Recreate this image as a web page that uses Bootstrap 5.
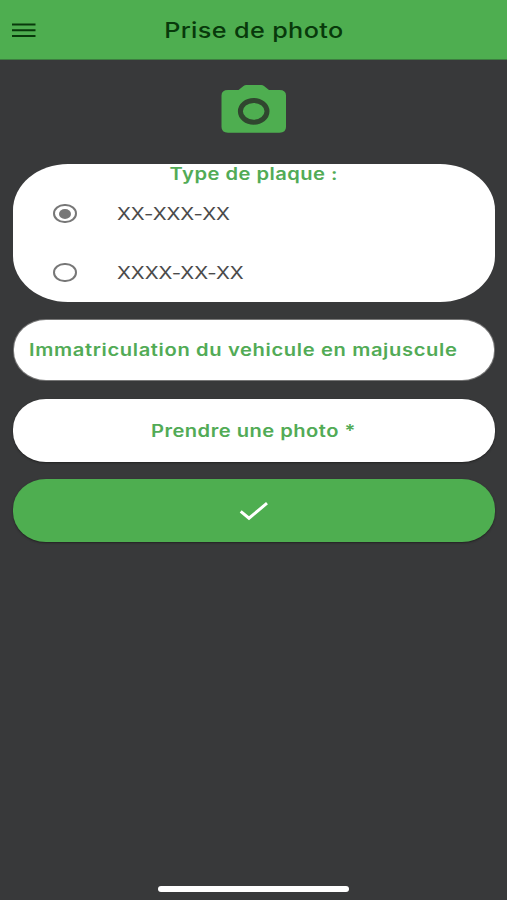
<!DOCTYPE html>
<html lang="fr">
<head>
<meta charset="utf-8">
<meta name="viewport" content="width=device-width, initial-scale=1">
<title>Prise de photo</title>
<link href="https://cdn.jsdelivr.net/npm/bootstrap@5.3.0/dist/css/bootstrap.min.css" rel="stylesheet">
<style>
  body { background: #38393a; font-family: Inter, "Liberation Sans", sans-serif; }
  .app { height: 900px; overflow: hidden; }
  .top-bar { height: 60px; background: #4eae50; padding: 0 12px; border-bottom: 1px solid #3d7d40; }
  .menu-btn { width: 24px; line-height: 0; }
  .wide { display: inline-block; transform: scaleX(1.2); white-space: nowrap; line-height: 20px; }
  .from-left { transform-origin: left center; }
  .title { font-size: 21px; font-weight: 500; color: #08390b; letter-spacing: .3px; padding-top: 6px; padding-left: 1px; }
  .green { color: #52ab56; font-size: 16.8px; font-weight: 600; letter-spacing: .4px; }
  .camera { margin: 24px auto 31px; line-height: 0; }
  .content { padding: 0 12.5px 0 13px; }
  .type-box { height: 138px; border-radius: 55px / 46px; margin-bottom: 18px; }
  .pill { height: 63px; border-radius: 33px / 30px; margin-bottom: 17px; border: 0; box-shadow: 0 1px 2px #222; }
  .pill-input { height: 60px; margin: 0 1px 19px; padding-left: 15px; border-radius: 32px / 29px; box-shadow: 0 0 0 1px #777; }
  .pill-input .green { letter-spacing: .53px; }
  .pill-send { background: #4eae50; }
  .option { height: 59px; padding-left: 40px; gap: 40px; cursor: pointer; }
  .option input { appearance: none; display: flex; align-items: center; justify-content: center; width: 23.5px; height: 19.5px; margin: 0; border: 2px solid #777; border-radius: 50%; }
  .option input:checked::before { content: ""; width: 12px; height: 10px; border-radius: 50%; background: #777; }
  .option .wide { font-size: 17px; color: #4b4b4b; letter-spacing: -.05px; }
  .home-bar { width: 191px; height: 6px; margin-bottom: 8px; }
</style>
<script src="https://cdn.jsdelivr.net/npm/bootstrap@5.3.0/dist/js/bootstrap.bundle.min.js"></script>
</head>
<body>
<div class="app d-flex flex-column">
  <header class="top-bar d-flex align-items-center">
    <button class="menu-btn btn p-0 border-0" type="button" aria-label="Menu">
      <svg width="24" height="14" viewBox="0 0 24 14"><path d="M0 1.500h23.500M0 7.300h23.500M0 13h23.500" stroke="#08390b" stroke-width="2.100"/></svg>
    </button>
    <div class="flex-fill text-center pe-4"><h1 class="wide title mb-0">Prise de photo</h1></div>
  </header>
  <main class="content d-flex flex-column flex-fill">
    <div class="camera">
      <svg width="65" height="49" viewBox="0 0 65 49">
        <path fill="#4eae50" d="M7 6H17.500L22.500 1.900Q23.700 .9 25.200 .9H40.300Q41.800 .9 43 1.900L48 6H58.500Q65 6 65 11.500V43Q65 48.700 58.500 48.700H7Q.5 48.700 .5 43V11.500Q.5 6 7 6Z"/>
        <ellipse cx="32.700" cy="27.300" rx="13.300" ry="10.900" fill="none" stroke="#30462f" stroke-width="5"/>
      </svg>
    </div>
    <section class="type-box bg-white text-center">
      <div class="wide green d-block">Type de plaque :</div>
      <label class="option d-flex align-items-center"><input type="radio" name="plaque" checked><span class="wide from-left">XX-XXX-XX</span></label>
      <label class="option d-flex align-items-center"><input type="radio" name="plaque"><span class="wide from-left">XXXX-XX-XX</span></label>
    </section>
    <label class="pill-input bg-white d-flex align-items-center"><span class="wide from-left green">Immatriculation du vehicule en majuscule</span></label>
    <button class="pill bg-white d-flex align-items-center justify-content-center" type="button"><span class="wide green">Prendre une photo *</span></button>
    <button class="pill pill-send d-flex align-items-center justify-content-center" type="button" aria-label="Valider">
      <svg width="30" height="20" viewBox="0 0 30 20"><path d="M1.700 10.300L10 17.200 28 2.200" fill="none" stroke="#fff" stroke-width="3"/></svg>
    </button>
    <div class="home-bar bg-white rounded-pill mt-auto mx-auto"></div>
  </main>
</div>
</body>
</html>
